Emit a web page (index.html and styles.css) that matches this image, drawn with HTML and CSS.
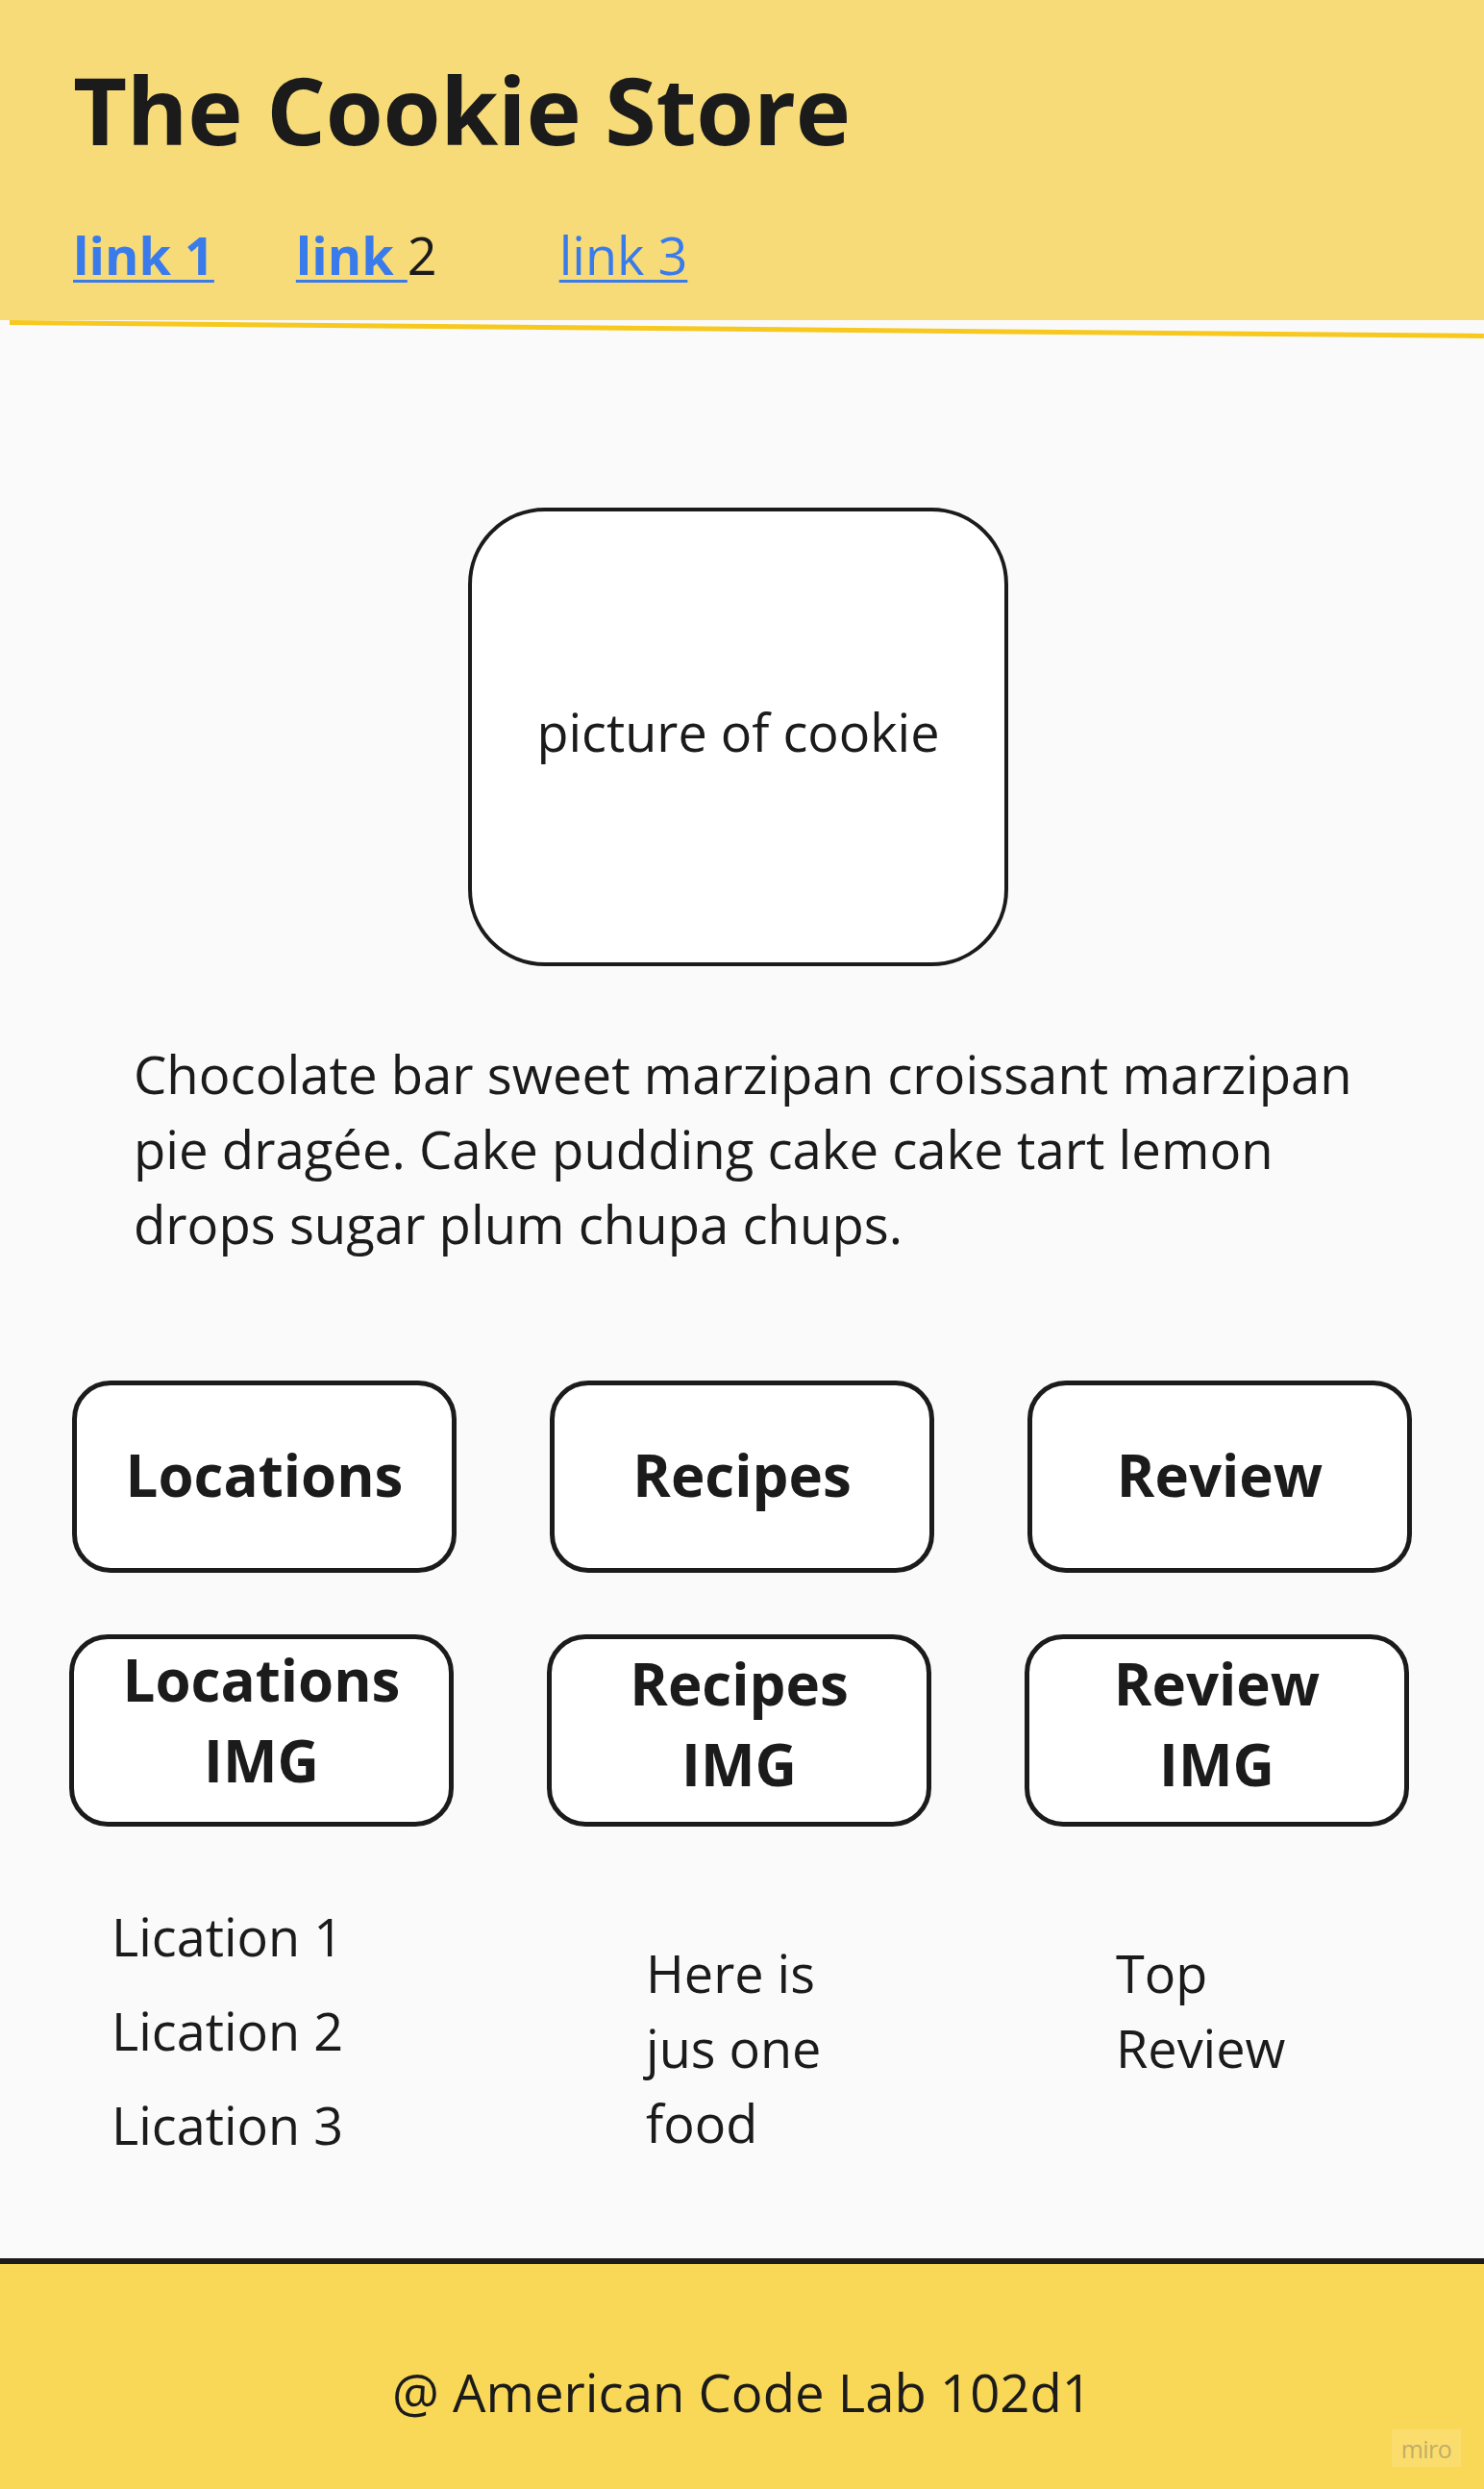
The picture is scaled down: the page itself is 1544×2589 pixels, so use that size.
FILE: index.html
```html
<!DOCTYPE html>
<html lang="en">
<head>
<meta charset="utf-8">
<title>The Cookie Store</title>
<link rel="stylesheet" href="styles.css">
</head>
<body>
<header class="site-header">
  <h1 class="title">The Cookie Store</h1>
  <nav class="nav">
    <a class="nav-link bold" href="#">link 1</a>
    <span class="nav-item"><a class="nav-link bold" href="#">link </a>2</span>
    <a class="nav-link" href="#">link 3</a>
  </nav>
</header>
<div class="header-rule"></div>
<main class="content">
  <div class="hero-box">picture of cookie</div>
  <p class="intro">Chocolate bar sweet marzipan croissant marzipan pie dragée. Cake pudding cake cake tart lemon drops sugar plum chupa chups.</p>
  <div class="btn-row">
    <div class="card">Locations</div>
    <div class="card">Recipes</div>
    <div class="card">Review</div>
  </div>
  <div class="btn-row row-img">
    <div class="card card-img"><span class="l1">Locations</span><span class="l2">IMG</span></div>
    <div class="card card-img low"><span class="l1">Recipes</span><span class="l2">IMG</span></div>
    <div class="card card-img low"><span class="l1">Review</span><span class="l2">IMG</span></div>
  </div>
  <div class="cols">
    <ul class="col col-loc">
      <li>Lication 1</li>
      <li>Lication 2</li>
      <li>Lication 3</li>
    </ul>
    <div class="col col-rec">Here is<br>jus one<br>food</div>
    <div class="col col-rev">Top<br>Review</div>
  </div>
</main>
<footer class="site-footer">
  <p class="footer-text">@ American Code Lab 102d1</p>
  <span class="miro">miro</span>
</footer>
</body>
</html>
```

FILE: styles.css
```css
html, body {
  margin: 0;
  padding: 0;
}
body {
  background: #fafafa;
  color: #1b1b1b;
  font-family: "Open Sans", "Noto Sans", sans-serif;
  min-height: 100vh;
  display: flex;
  flex-direction: column;
}
.site-header {
  background: #f6db78;
  height: 333px;
  padding: 0 0 0 76px;
  box-sizing: border-box;
  overflow: hidden;
}
.title {
  margin: 0;
  padding-top: 45px;
  font-size: 97px;
  font-weight: 700;
  line-height: 136px;
  letter-spacing: -0.3px;
}
.nav {
  display: flex;
  align-items: baseline;
  margin-top: 46px;
  font-size: 54px;
  line-height: 76px;
}
.nav-link {
  color: #3a7bec;
  text-decoration: underline;
  text-decoration-thickness: 3px;
  text-underline-offset: 5px;
}
.bold {
  font-weight: 700;
}
.nav > .nav-link:first-child {
  margin-right: 85px;
}
.nav-item {
  margin-right: 127px;
}
.header-rule {
  height: 5px;
  margin-left: 10px;
  background: #f7c81e;
  transform: rotate(0.52deg);
  transform-origin: 0 0;
}
.content {
  display: flex;
  flex-direction: column;
}
.hero-box {
  align-self: center;
  margin: 190px 8px 0 0;
  width: 562px;
  height: 477px;
  box-sizing: border-box;
  border: 4px solid #1b1b1b;
  border-radius: 80px;
  background: #fff;
  display: flex;
  align-items: center;
  justify-content: center;
  font-size: 54px;
  padding-bottom: 12px;
}
.intro {
  margin: 73px 0 0 139px;
  max-width: 1300px;
  font-size: 54.5px;
  line-height: 78px;
}
.btn-row {
  display: flex;
  gap: 97px;
  margin: 124px 0 0 75px;
}
.row-img {
  margin: 64px 0 0 72px;
}
.card {
  width: 400px;
  height: 200px;
  box-sizing: border-box;
  border: 5px solid #1b1b1b;
  border-radius: 40px;
  background: #fff;
  display: flex;
  align-items: center;
  justify-content: center;
  font-size: 60px;
  font-weight: 700;
  padding-bottom: 4px;
}
.card-img {
  flex-direction: column;
  justify-content: flex-start;
  line-height: 84px;
  padding: 0;
}
.card-img.low {
  padding-top: 4px;
}
.cols {
  display: flex;
  margin: 65px 0 0 116px;
  font-size: 54px;
  line-height: 78px;
}
.col {
  margin: 0;
  padding: 0;
  list-style: none;
}
.col-loc {
  width: 556px;
}
.col-loc li {
  line-height: 98px;
}
.col-rec {
  width: 489px;
  margin-top: 48px;
}
.col-rev {
  margin-top: 48px;
}
.site-footer {
  position: relative;
  flex: 1 0 auto;
  margin-top: 90px;
  border-top: 6px solid #1c1c1c;
  background: #fad857;
  min-height: 220px;
  display: flex;
  justify-content: center;
  align-items: flex-start;
}
.footer-text {
  margin: 0;
  padding-top: 95px;
  font-size: 54.5px;
  line-height: 76px;
}
.miro {
  position: absolute;
  right: 24px;
  bottom: 23px;
  width: 72px;
  height: 39px;
  background: #fbdd6e;
  color: #c2ad64;
  font-size: 25px;
  letter-spacing: -0.5px;
  display: flex;
  align-items: center;
  justify-content: center;
}
```
